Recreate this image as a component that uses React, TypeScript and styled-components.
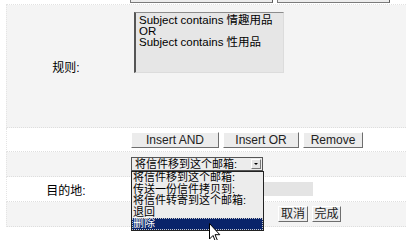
import { createGlobalStyle, styled } from 'styled-components';

const GlobalStyle = createGlobalStyle`
  body {
    margin: 0;
    background: #ffffff;
    font-family: "Liberation Sans", "Noto Sans CJK SC", sans-serif;
    color: #000;
    overflow: hidden;
  }
`;

const Page = styled.div`
  position: relative;
  width: 407px;
  height: 240px;
  overflow: hidden;
`;

const FormTable = styled.div`
  margin-left: 6px;
  width: 400px;
  display: flex;
  flex-direction: column;
`;

const TopRow = styled.div`
  height: 5px;
  display: flex;
  align-items: flex-start;
  gap: 4px;
  padding-left: 124px;
  border-bottom: 1px dotted #e2e2e2;
  box-sizing: border-box;
`;

const ClippedBox = styled.div<{ $width: number }>`
  width: ${({ $width }) => $width}px;
  height: 3px;
  box-sizing: border-box;
  border: 1px solid #7a7a7a;
  border-top: none;
  border-right-color: #5a5a5a;
  background: #ececec;
`;

const Row = styled.div<{ $gray?: boolean; $height: number }>`
  height: ${({ $height }) => $height}px;
  box-sizing: border-box;
  display: grid;
  grid-template-columns: 124px 1fr;
  align-items: center;
  background: ${({ $gray }) => ($gray ? '#f4f4f4' : '#ffffff')};
  border-left: 1px dotted #e4e4e4;
  border-bottom: 1px dotted #dedede;
`;

const Label = styled.div`
  text-align: center;
  font-size: 12px;
  padding-right: 6px;
`;

const Field = styled.div<{ $indent?: number; $top?: boolean }>`
  display: flex;
  align-items: center;
  gap: 4px;
  padding-left: ${({ $indent }) => $indent ?? 0}px;
  align-self: ${({ $top }) => ($top ? 'start' : 'center')};
  padding-top: ${({ $top }) => ($top ? '7px' : '0')};
`;

const RuleBox = styled.div`
  margin-left: 3px;
  width: 150px;
  height: 61px;
  box-sizing: border-box;
  padding: 2px 3px;
  background: #e6e6e6;
  border-style: solid;
  border-width: 1px 1px 1px 2px;
  border-color: #8c8c8c #dcdcdc #dcdcdc #555555;
  font-size: 11.5px;
  line-height: 11px;
  white-space: nowrap;
`;

const Button = styled.button<{ $width: number }>`
  width: ${({ $width }) => $width}px;
  height: 16px;
  padding: 0;
  box-sizing: border-box;
  background: #ececec;
  border-style: solid;
  border-width: 1px;
  border-color: #ffffff #6e6e6e #6e6e6e #ffffff;
  font-family: "Liberation Sans", "Noto Sans CJK SC", sans-serif;
  font-size: 12px;
  line-height: 14px;
  color: #222;
`;

const SelectWrap = styled.div`
  position: relative;
`;

const SelectBox = styled.div`
  width: 132px;
  height: 14px;
  box-sizing: border-box;
  display: flex;
  align-items: center;
  justify-content: space-between;
  padding: 0 1px 0 3px;
  background: #ececec;
  border: 1px solid #555;
  font-size: 11px;
  line-height: 12px;
`;

const ArrowButton = styled.span`
  width: 10px;
  height: 10px;
  box-sizing: border-box;
  display: flex;
  align-items: center;
  justify-content: center;
  background: #e4e4e4;
  border: 1px solid;
  border-color: #fff #777 #777 #fff;
  &::after {
    content: '';
    border-left: 2px solid transparent;
    border-right: 2px solid transparent;
    border-top: 2px solid #000;
  }
`;

const OptionList = styled.ul`
  position: absolute;
  left: 0;
  top: 14px;
  z-index: 2;
  width: 133px;
  margin: 0;
  padding: 0;
  list-style: none;
  box-sizing: border-box;
  background: #ececec;
  border: 1px solid #222;
`;

const Option = styled.li<{ $selected?: boolean }>`
  height: 11.6px;
  box-sizing: border-box;
  padding-left: 1px;
  font-size: 11px;
  line-height: 11px;
  white-space: nowrap;
  color: ${({ $selected }) => ($selected ? '#ffffff' : '#000')};
  background: ${({ $selected }) => ($selected ? '#0a246a' : 'transparent')};
  outline: ${({ $selected }) => ($selected ? '1px dotted #c9c9c9' : 'none')};
  outline-offset: -1px;
`;

const DestInput = styled.div`
  width: 182px;
  height: 14px;
  background: #e4e4e4;
`;

const Cursor = styled.svg`
  position: absolute;
  left: 209px;
  top: 223px;
  z-index: 3;
`;

const options = [
  '将信件移到这个邮箱:',
  '传送一份信件拷贝到:',
  '将信件转寄到这个邮箱:',
  '退回',
  '删除',
];

export default function App() {
  return (
    <Page>
      <GlobalStyle />
      <FormTable>
        <TopRow>
          <ClippedBox $width={143} />
          <ClippedBox $width={113} />
        </TopRow>
        <Row $gray $height={123}>
          <Label>规则:</Label>
          <Field $top>
            <RuleBox>
              Subject contains 情趣用品
              <br />
              OR
              <br />
              Subject contains 性用品
            </RuleBox>
          </Field>
        </Row>
        <Row $height={24}>
          <div />
          <Field>
            <Button $width={88}>Insert AND</Button>
            <Button $width={76}>Insert OR</Button>
            <Button $width={60}>Remove</Button>
          </Field>
        </Row>
        <Row $gray $height={25}>
          <div />
          <Field>
            <SelectWrap>
              <SelectBox>
                <span>将信件移到这个邮箱:</span>
                <ArrowButton />
              </SelectBox>
              <OptionList>
                {options.map((opt, i) => (
                  <Option key={opt} $selected={i === options.length - 1}>
                    {opt}
                  </Option>
                ))}
              </OptionList>
            </SelectWrap>
          </Field>
        </Row>
        <Row $height={25}>
          <Label>目的地:</Label>
          <Field>
            <DestInput />
          </Field>
        </Row>
        <Row $gray $height={25}>
          <div />
          <Field $indent={147}>
            <Button $width={30}>取消</Button>
            <Button $width={29}>完成</Button>
          </Field>
        </Row>
      </FormTable>
      <Cursor width="13" height="20" viewBox="0 0 13 20">
        <path
          d="M0.5 0.5 L0.5 16 L4 12.5 L6.5 18.5 L8.5 17.6 L6 11.7 L10.8 11.7 Z"
          fill="#ffffff"
          stroke="#000000"
          strokeWidth="1"
          strokeLinejoin="miter"
        />
      </Cursor>
    </Page>
  );
}
